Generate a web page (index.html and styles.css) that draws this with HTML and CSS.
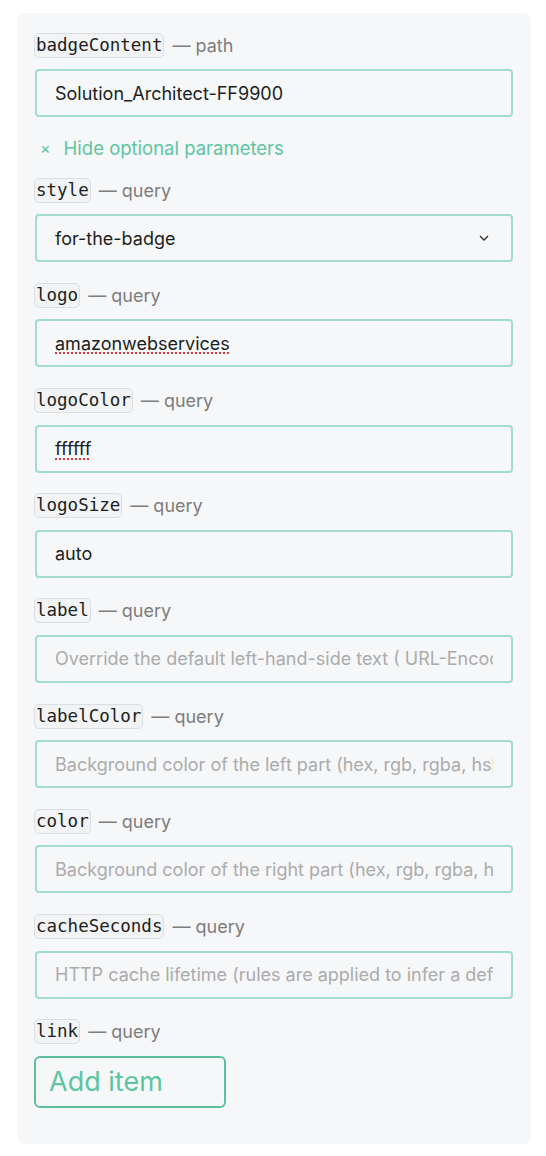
FILE: index.html
```html
<!DOCTYPE html>
<html>
<head>
<meta charset="utf-8">
<link rel="stylesheet" href="styles.css">
</head>
<body>
<div class="panel">
  <div class="field">
    <div class="label-row"><code class="chip">badgeContent</code><span class="kind">— path</span></div>
    <div class="input"><span class="value">Solution_Architect-FF9900</span></div>
  </div>

  <div class="toggle"><span class="x">×</span><span>Hide optional parameters</span></div>

  <div class="field">
    <div class="label-row"><code class="chip">style</code><span class="kind">— query</span></div>
    <div class="input select"><span class="value">for-the-badge</span>
      <svg class="chev" width="10" height="6" viewBox="0 0 10 6"><path d="M1 1 L5 5 L9 1" fill="none" stroke="#333" stroke-width="1.4"/></svg>
    </div>
  </div>

  <div class="field">
    <div class="label-row"><code class="chip">logo</code><span class="kind">— query</span></div>
    <div class="input"><span class="value spell">amazonwebservices</span></div>
  </div>

  <div class="field">
    <div class="label-row"><code class="chip">logoColor</code><span class="kind">— query</span></div>
    <div class="input"><span class="value spell">ffffff</span></div>
  </div>

  <div class="field">
    <div class="label-row"><code class="chip">logoSize</code><span class="kind">— query</span></div>
    <div class="input"><span class="value">auto</span></div>
  </div>

  <div class="field">
    <div class="label-row"><code class="chip">label</code><span class="kind">— query</span></div>
    <input class="input text-input" type="text" placeholder="Override the default left-hand-side text ( URL-Encoding needed for spaces or special characters!)">
  </div>

  <div class="field">
    <div class="label-row"><code class="chip">labelColor</code><span class="kind">— query</span></div>
    <input class="input text-input" type="text" placeholder="Background color of the left part (hex, rgb, rgba, hsl, hsla and css named colors supported).">
  </div>

  <div class="field">
    <div class="label-row"><code class="chip">color</code><span class="kind">— query</span></div>
    <input class="input text-input" type="text" placeholder="Background color of the right part (hex, rgb, rgba, hsl, hsla and css named colors supported).">
  </div>

  <div class="field">
    <div class="label-row"><code class="chip">cacheSeconds</code><span class="kind">— query</span></div>
    <input class="input text-input" type="text" placeholder="HTTP cache lifetime (rules are applied to infer a default value on a per-badge basis)">
  </div>

  <div class="field last">
    <div class="label-row"><code class="chip">link</code><span class="kind">— query</span></div>
    <div class="add">Add item</div>
  </div>
</div>
</body>
</html>
```

FILE: styles.css
```css
html, body {
  margin: 0;
  padding: 0;
  background: #ffffff;
}

body {
  font-family: Inter, "Noto Sans", sans-serif;
  color: #1c1e21;
}

.panel {
  margin: 13px 15px 0 17px;
  width: 514px;
  box-sizing: border-box;
  background: #f6f7f9;
  border-radius: 8px;
  padding: 19px 18px 36px 18px;
  display: flex;
  flex-direction: column;
}

.field {
  display: flex;
  flex-direction: column;
  margin-bottom: 20.2px;
}

.field.last {
  margin-bottom: 0;
}

.label-row {
  display: flex;
  align-items: center;
  height: 26px;
  margin-bottom: 11px;
  margin-left: -1px;
}

.chip {
  font-family: "DejaVu Sans Mono", monospace;
  font-size: 17.5px;
  line-height: 23px;
  color: #1c1e21;
  background: #f2f3f5;
  border: 1px solid #dadde1;
  border-radius: 5px;
  padding: 0 1px;
}

.kind {
  margin-left: 8px;
  font-size: 18px;
  color: #7d7d7d;
}

.input {
  width: 100%;
  height: 48px;
  box-sizing: border-box;
  border: 2px solid #a2dccd;
  border-radius: 4px;
  padding: 0 18px;
  margin: 0;
  display: flex;
  align-items: center;
  font-family: Inter, "Noto Sans", sans-serif;
  font-size: 18px;
  background: transparent;
  overflow: hidden;
  white-space: nowrap;
  outline: none;
}

.text-input {
  display: block;
  color: #1c1e21;
}

.text-input::placeholder {
  color: #ababab;
  opacity: 1;
}

.value {
  color: #1c1e21;
}

.spell {
  text-decoration: underline dotted #e0393e;
  text-decoration-thickness: 1.5px;
  text-underline-offset: 3px;
}

.select {
  justify-content: space-between;
  padding-right: 22px;
}

.chev {
  display: block;
}

.toggle {
  display: flex;
  align-items: center;
  height: 22px;
  margin-bottom: 18px;
  color: #5cc59f;
  font-size: 18.5px;
}

.toggle .x {
  margin-left: 5px;
  margin-right: 13px;
  font-size: 16px;
}

.add {
  align-self: flex-start;
  width: 192px;
  height: 52px;
  box-sizing: border-box;
  border: 2px solid #5ebf9c;
  border-radius: 6px;
  padding-left: 13px;
  display: flex;
  align-items: center;
  font-size: 27px;
  color: #5cc59f;
  margin-left: -1px;
}
```
